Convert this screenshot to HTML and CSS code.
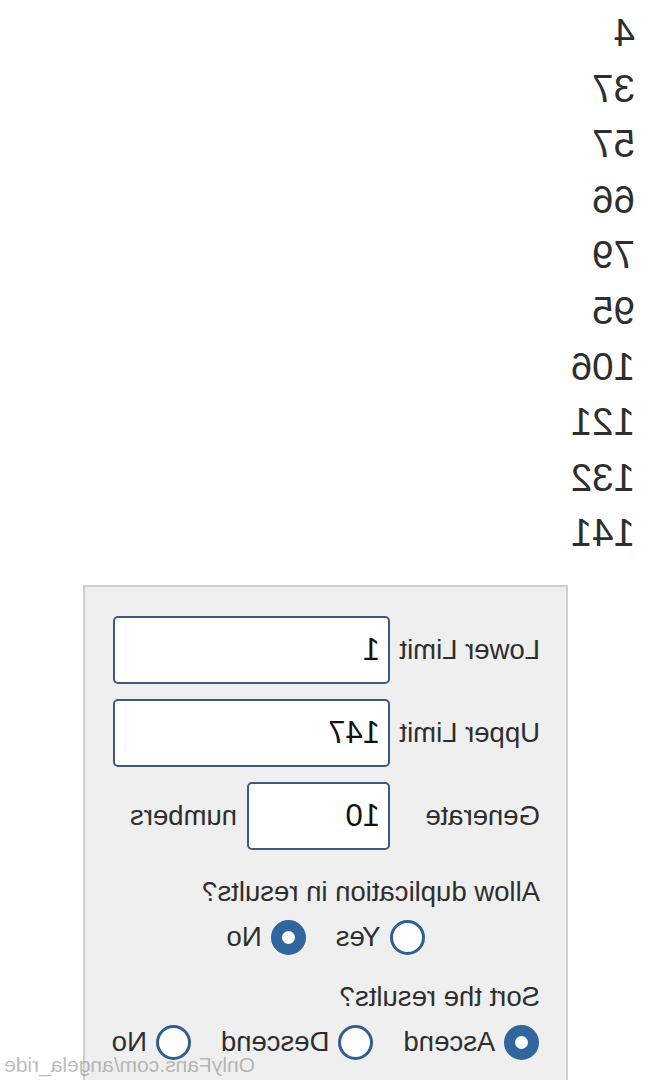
FILE: index.html
```html
<!DOCTYPE html>
<html lang="en">
<head>
  <meta charset="UTF-8" />
  <meta name="viewport" content="width=device-width, initial-scale=1.0"/>
  <title>Random Number Generator</title>
  <link rel="stylesheet" href="styles.css">
</head>
<body>
  <div class="page">
    <ul class="results">
      <li>4</li>
      <li>37</li>
      <li>57</li>
      <li>66</li>
      <li>79</li>
      <li>95</li>
      <li>106</li>
      <li>121</li>
      <li>132</li>
      <li>141</li>
    </ul>

    <form class="panel">
      <div class="row">
        <label class="label" for="lower">Lower Limit</label>
        <input id="lower" class="field" type="text" value="1">
      </div>
      <div class="row">
        <label class="label" for="upper">Upper Limit</label>
        <input id="upper" class="field" type="text" value="147">
      </div>
      <div class="row">
        <label class="label" for="count">Generate</label>
        <input id="count" class="field small" type="text" value="10">
        <span class="unit">numbers</span>
      </div>

      <p class="question">Allow duplication in results?</p>
      <div class="choices">
        <label class="choice"><span class="radio"></span>Yes</label>
        <label class="choice"><span class="radio on"></span>No</label>
      </div>

      <p class="question">Sort the results?</p>
      <div class="choices">
        <label class="choice"><span class="radio on"></span>Ascend</label>
        <label class="choice"><span class="radio"></span>Descend</label>
        <label class="choice"><span class="radio"></span>No</label>
      </div>
    </form>

    <div class="watermark">OnlyFans.com/angela_ride</div>
  </div>
</body>
</html>
```

FILE: styles.css
```css
body {
  margin: 0;
  background: #fff;
  font-family: "Liberation Sans", Arial, sans-serif;
  color: #2b2b2b;
  overflow: hidden;
}
.page {
  position: relative;
  width: 651px;
  height: 1080px;
  transform: scaleX(-1);
}
.results {
  list-style: none;
  margin: 0;
  padding: 5px 0 0 16px;
  font-size: 38.5px;
  line-height: 55.6px;
  color: #2e2e2e;
}
.panel {
  margin: 24px 0 0 83px;
  width: 485px;
  height: 520px;
  box-sizing: border-box;
  background: #efefef;
  border: 2px solid #cfcfcf;
  padding: 29px 0 0 26px;
}
.row {
  display: flex;
  align-items: center;
  margin-bottom: 15px;
}
.label {
  width: 150px;
  font-size: 27.5px;
  color: #2e2e2e;
}
.field {
  width: 277px;
  height: 68px;
  box-sizing: border-box;
  border: 2px solid #3d5a7e;
  border-radius: 5px;
  background: #fff;
  padding: 0 8px;
  font-family: inherit;
  font-size: 31px;
  color: #111;
}
.field.small {
  width: 143px;
}
.unit {
  margin-left: 10px;
  font-size: 27.5px;
  color: #2e2e2e;
}
.question {
  margin: 26px 0 0;
  font-size: 27.5px;
  color: #2e2e2e;
}
.choices {
  display: flex;
  justify-content: center;
  gap: 30px;
  margin: 12px 0 0 -26px;
}
.choice {
  display: flex;
  align-items: center;
  gap: 9px;
  font-size: 27.5px;
  color: #2e2e2e;
}
.radio {
  width: 35px;
  height: 35px;
  box-sizing: border-box;
  border: 3px solid #2f5f92;
  border-radius: 50%;
  background: #fff;
}
.radio.on {
  border: 11.5px solid #30659d;
}
.watermark {
  position: absolute;
  left: 396px;
  top: 1053px;
  font-size: 21px;
  color: rgba(130, 130, 130, 0.55);
}
```
